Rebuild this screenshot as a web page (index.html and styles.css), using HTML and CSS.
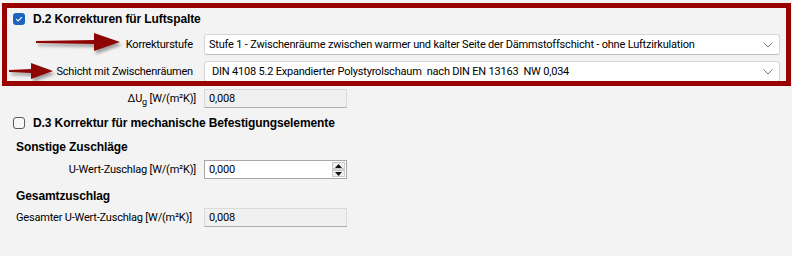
FILE: index.html
```html
<!DOCTYPE html>
<html lang="de">
<head>
  <meta charset="UTF-8" />
  <title>Korrekturen</title>
  <link rel="stylesheet" href="styles.css">
</head>
<body>

  <div class="frame">
    <div class="frame-inner">
      <div class="check-row">
        <span class="check checked">
          <svg width="12" height="12" viewBox="0 0 12 12"><path d="M3.2 6.2 L5.1 8 L8.9 4.1" fill="none" stroke="#fff" stroke-width="1.1"/></svg>
        </span>
        <span class="section-title">D.2 Korrekturen für Luftspalte</span>
      </div>

      <div class="combo-row">
        <div class="label">
          <svg class="arrow arrow-long" width="86" height="24" viewBox="0 0 86 24"><polygon points="0,11 58,10 58,3 84,12 58,21 58,14 0,13"/></svg>
          <span>Korrekturstufe</span>
        </div>
        <div class="combo">
          <span>Stufe 1 - Zwischenräume zwischen warmer und kalter Seite der Dämmstoffschicht - ohne Luftzirkulation</span>
          <svg class="chevron" width="10" height="6" viewBox="0 0 10 6"><path d="M0.5 0.5 L5 5 L9.5 0.5" fill="none" stroke="#777" stroke-width="1"/></svg>
        </div>
      </div>

      <div class="combo-row">
        <div class="label">
          <svg class="arrow arrow-short" width="46" height="22" viewBox="0 0 46 22"><polygon points="0,10 22,9 22,3 44,11 22,19 22,13 0,12"/></svg>
          <span>Schicht mit Zwischenräumen</span>
        </div>
        <div class="combo combo-wide">
          <span>DIN 4108 5.2 Expandierter Polystyrolschaum &nbsp;nach DIN EN 13163 &nbsp;NW 0,034</span>
          <svg class="chevron" width="10" height="6" viewBox="0 0 10 6"><path d="M0.5 0.5 L5 5 L9.5 0.5" fill="none" stroke="#777" stroke-width="1"/></svg>
        </div>
      </div>
    </div>
  </div>

  <div class="rows">
    <div class="value-row first">
      <div class="label"><span>ΔU<sub>g</sub> [W/(m²K)]</span></div>
      <div class="field readonly">0,008</div>
    </div>

    <div class="check-row section-check">
      <span class="check"></span>
      <span class="section-title">D.3 Korrektur für mechanische Befestigungselemente</span>
    </div>

    <div class="heading">Sonstige Zuschläge</div>

    <div class="value-row">
      <div class="label"><span>U-Wert-Zuschlag [W/(m²K)]</span></div>
      <div class="field editable">
        <span>0,000</span>
        <div class="spin">
          <div class="spin-btn"><svg width="7" height="4" viewBox="0 0 7 4"><polygon points="0,4 3.5,0 7,4"/></svg></div>
          <div class="spin-btn"><svg width="7" height="4" viewBox="0 0 7 4"><polygon points="0,0 3.5,4 7,0"/></svg></div>
        </div>
      </div>
    </div>

    <div class="heading total">Gesamtzuschlag</div>

    <div class="value-row last">
      <div class="label left"><span>Gesamter U-Wert-Zuschlag [W/(m²K)]</span></div>
      <div class="field readonly">0,008</div>
    </div>
  </div>

</body>
</html>
```

FILE: styles.css
```css
body {
  margin: 0;
  width: 792px;
  height: 256px;
  overflow: hidden;
  background: #f3f3f3;
  color: #000;
  font-family: Roboto, "Liberation Sans", sans-serif;
  font-size: 11px;
  letter-spacing: -0.2px;
}

/* red annotation frame round section D.2 */
.frame {
  margin: 3px 1px 0 2px;
  border: 5px solid #990000;
}

.frame-inner {
  height: 73px;
  padding: 0 6px;
  overflow: hidden;
}

.check-row {
  display: flex;
  align-items: center;
  height: 22px;
  gap: 8px;
}

.check {
  width: 12px;
  height: 12px;
  box-sizing: border-box;
  border: 1px solid #5c5c5c;
  border-radius: 3px;
  background: #f7f7f7;
  flex: none;
}

.check.checked {
  border: none;
  background: #1c63bf;
}

.check svg {
  display: block;
}

.section-title,
.heading {
  font-family: "Liberation Sans", Arial, sans-serif;
  font-weight: bold;
  font-size: 12px;
  letter-spacing: -0.1px;
}

.combo-row {
  display: grid;
  grid-template-columns: 183px 1fr;
  column-gap: 8px;
  align-items: center;
  margin-top: 4px;
}

.combo-row + .combo-row {
  margin-top: 6px;
}

.label {
  display: flex;
  justify-content: flex-end;
  align-items: center;
  padding-right: 3px;
  white-space: nowrap;
}

.combo-row .label {
  height: 21px;
}

.arrow {
  fill: #8e0505;
  filter: drop-shadow(2px 3px 1.5px rgba(0, 0, 0, 0.35));
  flex: none;
}

.arrow-long {
  margin-right: 4px;
  margin-bottom: 5px;
}

.arrow-short {
  margin-right: 1px;
  margin-bottom: 2px;
}

.combo {
  height: 21px;
  box-sizing: border-box;
  display: flex;
  align-items: center;
  justify-content: space-between;
  padding: 0 5px 0 4px;
  background: #fff;
  border: 1px solid #d6d6d6;
  border-bottom-color: #bdbdbd;
  border-radius: 3px;
  white-space: nowrap;
}

.combo-wide {
  padding-left: 7px;
}

.chevron {
  flex: none;
  margin-right: 1px;
}

.rows {
  padding-left: 16px;
}

.value-row {
  display: grid;
  grid-template-columns: 180px 143px;
  column-gap: 8px;
  align-items: center;
  margin-top: 4px;
}

.value-row.first {
  margin-top: 3px;
}

.value-row.last {
  margin-top: 3px;
}

.value-row .label {
  padding-right: 0;
}

.value-row .label.left {
  justify-content: flex-start;
}

sub {
  font-size: 9px;
  vertical-align: -3px;
  line-height: 0;
}

.field {
  height: 19px;
  box-sizing: border-box;
  display: flex;
  align-items: center;
  justify-content: space-between;
  padding: 0 0 0 4px;
}

.readonly {
  background: #f0f0f0;
  border: 1px solid #dadada;
  border-bottom-color: #ababab;
}

.editable {
  background: #fff;
  border: 1px solid #a7a7a7;
}

.spin {
  display: flex;
  flex-direction: column;
  gap: 1px;
  width: 13px;
  height: 15px;
  margin-right: 1px;
  background: #d4d4d4;
}

.spin-btn {
  flex: 1;
  display: flex;
  align-items: center;
  justify-content: center;
  background: #efefef;
  border: 1px solid #c9c9c9;
}

.spin-btn svg {
  fill: #111;
}

.section-check {
  margin: 4px 0 0 -3px;
}

.heading {
  height: 18px;
  line-height: 18px;
  margin-top: 4px;
}

.heading.total {
  margin-top: 8px;
}
```
